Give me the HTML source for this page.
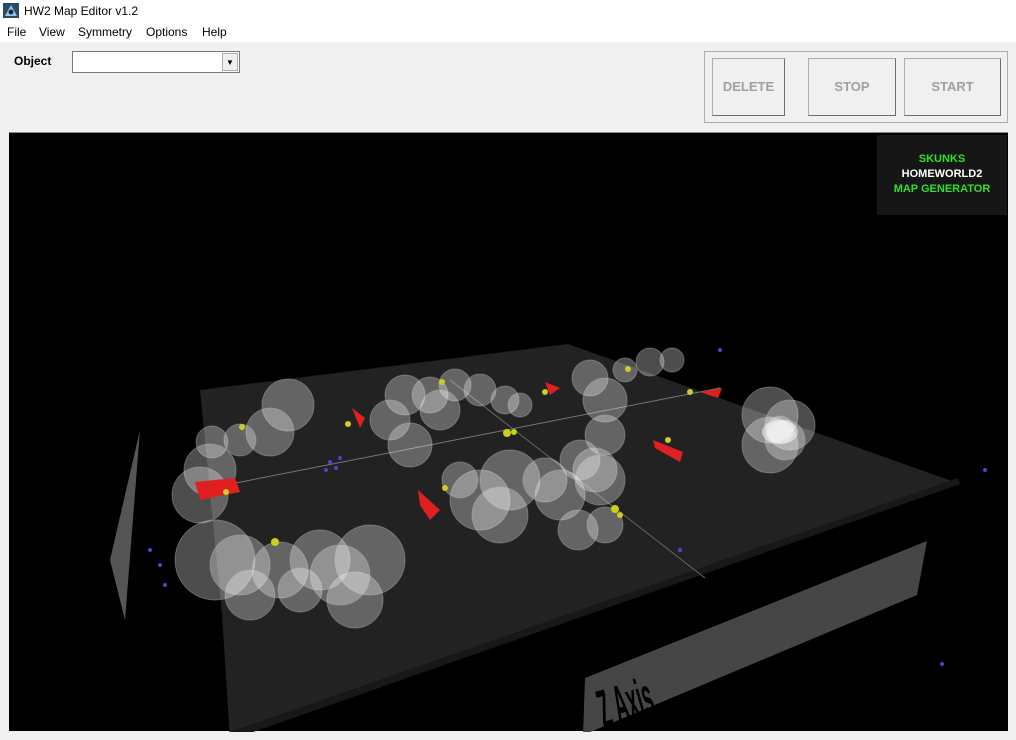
<!DOCTYPE html>
<html><head><style>
*{margin:0;padding:0;box-sizing:border-box}
body{width:1016px;height:740px;background:#f0f0f0;font-family:"Liberation Sans",sans-serif;position:relative;overflow:hidden}
.title{position:absolute;left:0;top:0;width:1016px;height:22px;background:#fff;font-size:12px}
.menu{position:absolute;left:0;top:22px;width:1016px;height:20px;background:#fff;font-size:12px}
.menu span{position:absolute;top:3px}
.btn{position:absolute;top:58px;height:58px;border:1px solid #adadad;border-right-color:#6d6d6d;border-bottom-color:#6d6d6d;background:#f0f0f0;color:#a0a0a0;font-weight:bold;font-size:13px;text-align:center;line-height:56px}
</style></head><body>
<div class="title">
<svg style="position:absolute;left:3px;top:3px" width="16" height="15"><rect width="16" height="15" fill="#2a4a66"/><path d="M2 13 L8 2 L14 13 Z" fill="#8fc8e8"/><circle cx="8" cy="9" r="2.5" fill="#1a2a3a"/></svg>
<span style="position:absolute;left:24px;top:4px">HW2 Map Editor v1.2</span></div>
<div class="menu"><span style="left:7px">File</span><span style="left:39px">View</span><span style="left:78px">Symmetry</span><span style="left:146px">Options</span><span style="left:202px">Help</span></div>
<div style="position:absolute;left:14px;top:54px;font-size:12px;font-weight:bold">Object</div>
<div style="position:absolute;left:72px;top:51px;width:168px;height:22px;background:#fff;border:1px solid #7a7a7a"><div style="position:absolute;right:1px;top:1px;width:16px;height:18px;background:#f0f0f0;border:1px solid #adadad;font-size:8px;text-align:center;line-height:17px">▼</div></div>
<div style="position:absolute;left:704px;top:51px;width:304px;height:72px;border:1px solid #adadad"></div>
<div class="btn" style="left:712px;width:73px">DELETE</div>
<div class="btn" style="left:808px;width:88px">STOP</div>
<div class="btn" style="left:904px;width:97px">START</div>
<div style="position:absolute;left:9px;top:132px;width:999px;height:599px;background:#000;border-top:1px solid #888">
<svg width="999" height="599" style="position:absolute;left:0;top:0">
<g transform="translate(-9,-133)">
<polygon points="200,390 568,344 960,484 230,740 222,615" fill="#222"/>
<polygon points="960,484 230,740 230,732 958,478" fill="#181818"/>
<polygon points="585,678 927,541 917,595 583,735" fill="#464646"/>
<polygon points="110,560 140,430 125,620" fill="#555"/>
<text x="0" y="0" transform="translate(604,728) rotate(-16) scale(0.62,1.8)" font-size="30" font-weight="bold" fill="#000" font-family="Liberation Sans">Z Axis</text>
<line x1="200" y1="490" x2="720" y2="388" stroke="#777" stroke-width="1"/>
<line x1="450" y1="380" x2="705" y2="578" stroke="#666"/>
<g fill="#fff" fill-opacity="0.3" stroke="#bbb" stroke-opacity="0.4">
<circle cx="288" cy="405" r="26"/><circle cx="270" cy="432" r="24"/><circle cx="240" cy="440" r="16"/><circle cx="212" cy="442" r="16"/><circle cx="210" cy="470" r="26"/><circle cx="200" cy="495" r="28"/>
<circle cx="215" cy="560" r="40"/><circle cx="240" cy="565" r="30"/><circle cx="280" cy="570" r="28"/><circle cx="320" cy="560" r="30"/><circle cx="355" cy="600" r="28"/><circle cx="370" cy="560" r="35"/><circle cx="250" cy="595" r="25"/><circle cx="300" cy="590" r="22"/><circle cx="340" cy="575" r="30"/>
<circle cx="405" cy="395" r="20"/><circle cx="390" cy="420" r="20"/><circle cx="410" cy="445" r="22"/><circle cx="430" cy="395" r="18"/><circle cx="455" cy="385" r="16"/><circle cx="480" cy="390" r="16"/><circle cx="505" cy="400" r="14"/><circle cx="520" cy="405" r="12"/><circle cx="440" cy="410" r="20"/>
<circle cx="590" cy="378" r="18"/><circle cx="605" cy="400" r="22"/><circle cx="625" cy="370" r="12"/><circle cx="650" cy="362" r="14"/><circle cx="672" cy="360" r="12"/><circle cx="605" cy="435" r="20"/><circle cx="595" cy="470" r="22"/>
<circle cx="480" cy="500" r="30"/><circle cx="510" cy="480" r="30"/><circle cx="500" cy="515" r="28"/><circle cx="545" cy="480" r="22"/><circle cx="560" cy="495" r="25"/><circle cx="580" cy="460" r="20"/><circle cx="600" cy="480" r="25"/><circle cx="578" cy="530" r="20"/><circle cx="605" cy="525" r="18"/><circle cx="460" cy="480" r="18"/>
<circle cx="770" cy="415" r="28"/><circle cx="790" cy="425" r="25"/><circle cx="770" cy="445" r="28"/><circle cx="785" cy="440" r="20"/><circle cx="780" cy="430" r="14"/>
</g>
<ellipse cx="780" cy="432" rx="18" ry="12" fill="#fff" fill-opacity="0.5"/>
<g fill="#e02020"><polygon points="195,482 235,478 240,492 200,500"/><polygon points="418,490 440,510 430,520 420,505"/><polygon points="352,408 365,418 360,428"/><polygon points="545,382 560,388 550,395"/><polygon points="653,440 683,452 680,462 655,448"/><polygon points="700,392 722,388 718,398"/></g>
<g fill="#cccc22"><circle cx="226" cy="492" r="3"/><circle cx="275" cy="542" r="4"/><circle cx="242" cy="427" r="3"/><circle cx="348" cy="424" r="3"/><circle cx="445" cy="488" r="3"/><circle cx="507" cy="433" r="4"/><circle cx="514" cy="432" r="3"/><circle cx="615" cy="509" r="4"/><circle cx="620" cy="515" r="3"/><circle cx="668" cy="440" r="3"/><circle cx="628" cy="369" r="3"/><circle cx="690" cy="392" r="3"/><circle cx="545" cy="392" r="3"/><circle cx="442" cy="382" r="3"/></g>
<g fill="#4848c8"><circle cx="330" cy="462" r="2"/><circle cx="336" cy="468" r="2"/><circle cx="326" cy="470" r="2"/><circle cx="340" cy="458" r="2"/><circle cx="160" cy="565" r="2"/><circle cx="150" cy="550" r="2"/><circle cx="165" cy="585" r="2"/><circle cx="985" cy="470" r="2"/><circle cx="942" cy="664" r="2"/><circle cx="720" cy="350" r="2"/><circle cx="680" cy="550" r="2"/></g>
</g></svg>
<div style="position:absolute;left:868px;top:2px;width:130px;height:80px;background:#161616;text-align:center;font-size:11px;font-weight:bold;line-height:15px;padding-top:17px">
<div style="color:#2ee02e">SKUNKS</div><div style="color:#fff">HOMEWORLD2</div><div style="color:#2ee02e">MAP GENERATOR</div></div>
</div>
</body></html>
